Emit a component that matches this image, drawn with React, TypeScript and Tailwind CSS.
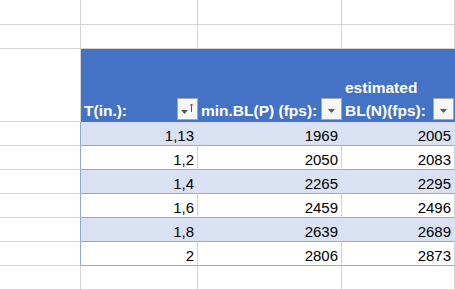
import React from 'react';

const GRID = 'border-[#d4d4d4]';
const cols = 'grid grid-cols-[81px_117px_144px_113px]';

const rows: string[][] = [
  ['1,13', '1969', '2005'],
  ['1,2', '2050', '2083'],
  ['1,4', '2265', '2295'],
  ['1,6', '2459', '2496'],
  ['1,8', '2639', '2689'],
  ['2', '2806', '2873'],
];

const FilterButton = ({ sorted }: { sorted?: boolean }) => (
  <div className="absolute right-0 bottom-[2px] w-[21px] h-[22px] border border-[#a6a6a6] bg-[#f7f7f7]">
    <svg className="absolute -left-px -top-px" width="21" height="22" viewBox="0 0 21 22">
      {sorted ? (
        <>
          <polygon points="4,12 11,12 7.5,16" fill="#595959" />
          <line x1="14.5" y1="6" x2="14.5" y2="14" stroke="#595959" strokeWidth="1" />
          <polyline points="13,7.5 14.5,6 16,7.5" fill="none" stroke="#595959" strokeWidth="1" />
        </>
      ) : (
        <polygon points="7,11 14,11 10.5,15" fill="#595959" />
      )}
    </svg>
  </div>
);

const BlankRow = ({ h }: { h: string }) => (
  <div className={cols}>
    {[0, 1, 2, 3].map((i) => (
      <div key={i} className={`${h} border-r border-b ${GRID}`} />
    ))}
  </div>
);

export default function App() {
  return (
    <div className="w-[455px] h-[290px] overflow-hidden bg-white" style={{ fontFamily: '"Liberation Sans", Arial, sans-serif' }}>
      <BlankRow h="h-[25px]" />
      <BlankRow h="h-[24px]" />

      {/* header */}
      <div className={`${cols} text-white font-bold text-[15.5px] leading-[23px]`}>
        <div className={`h-[73px] border-r border-b ${GRID}`} />
        <div className="relative h-[73px] bg-[#4472c4] flex items-end pl-[3px]">
          <span>T(in.):</span>
          <FilterButton sorted />
        </div>
        <div className="relative h-[73px] bg-[#4472c4] flex items-end pl-[3px]">
          <span>min.BL(P) (fps):</span>
          <FilterButton />
        </div>
        <div className="relative h-[73px] bg-[#4472c4] flex flex-col justify-end pl-[3px]">
          <span>estimated</span>
          <span>BL(N)(fps):</span>
          <div className="absolute right-px bottom-0 w-[21px] h-[24px]">
            <FilterButton />
          </div>
        </div>
      </div>

      {rows.map((r, idx) => {
        const band = idx % 2 === 0;
        const inner = band ? 'bg-[#d9e1f2] border-r-[#d9e1f2]' : 'bg-white border-r-[#d4d4d4]';
        return (
          <div key={idx} className={`${cols} text-black text-[15px] leading-[18px]`}>
            <div className="h-[24px] border-r border-b border-b-[#d4d4d4] border-r-[#8ea9db]" />
            {r.map((v, j) => (
              <div
                key={j}
                className={`h-[24px] border-r border-b border-b-[#8ea9db] ${inner} flex items-end justify-end pr-[3px]`}
              >
                {v}
              </div>
            ))}
          </div>
        );
      })}

      <BlankRow h="h-[24px]" />
    </div>
  );
}
